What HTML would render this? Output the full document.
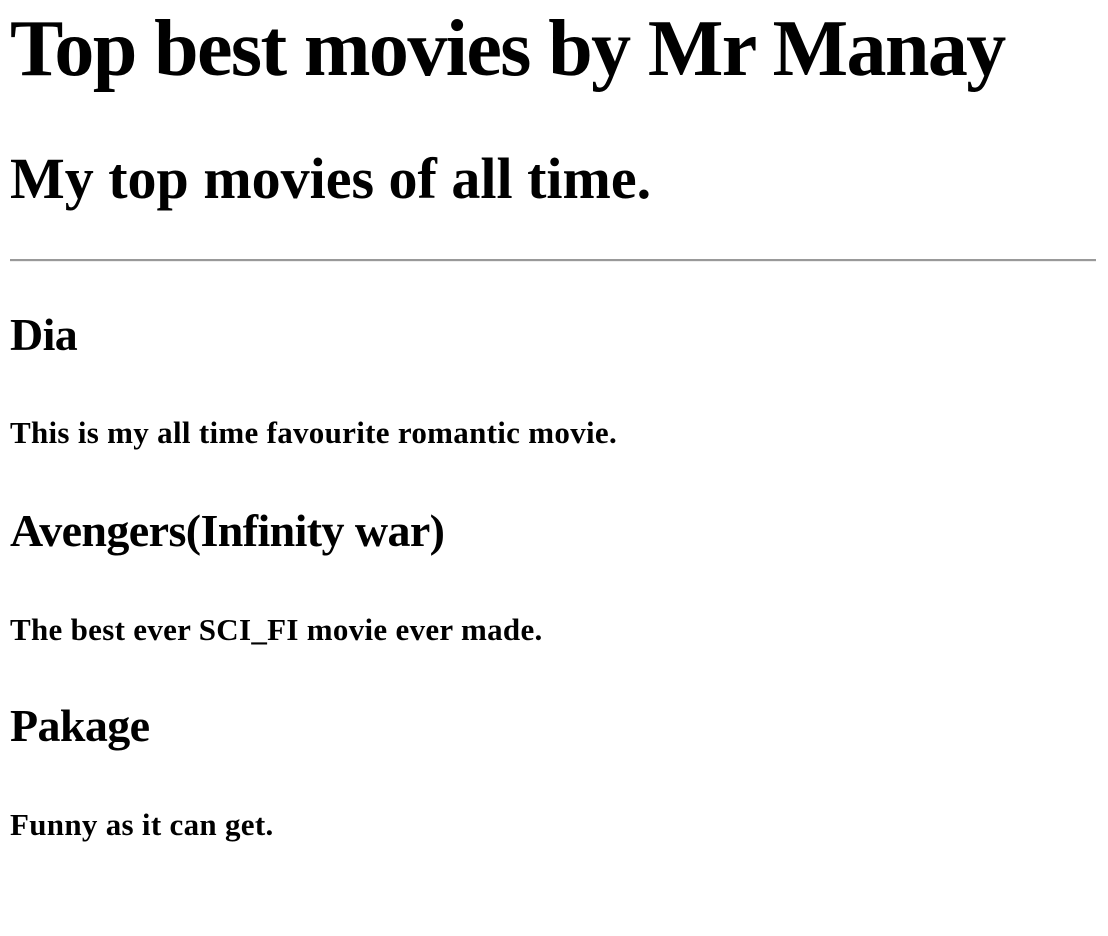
<!DOCTYPE html>
<html><head><meta charset="utf-8"><style>
body{margin:0;background:#fff;width:1108px;height:936px;position:relative;overflow:hidden;font-family:"Liberation Serif",serif;font-weight:bold;color:#000}
div.t{position:absolute;left:10px;line-height:1;white-space:nowrap}
.h1{font-size:80px;letter-spacing:-1.6px}.h2{font-size:58px}.h3{font-size:46px;letter-spacing:-0.6px}.h4{font-size:31px;letter-spacing:0.3px}
.hr{position:absolute;left:10px;top:259px;width:1086px;border-top:2px solid #999;border-bottom:1px solid #eee;box-sizing:border-box;height:3px}
</style></head><body>
<div class="t h1" style="top:9px">Top best movies by Mr Manay</div>
<div class="t h2" style="top:150px">My top movies of all time.</div>
<div class="hr"></div>
<div class="t h3" style="top:312px">Dia</div>
<div class="t h4" style="top:417px">This is my all time favourite romantic movie.</div>
<div class="t h3" style="top:508px">Avengers(Infinity war)</div>
<div class="t h4" style="top:614px">The best ever SCI_FI movie ever made.</div>
<div class="t h3" style="top:703px">Pakage</div>
<div class="t h4" style="top:809px">Funny as it can get.</div>
</body></html>
